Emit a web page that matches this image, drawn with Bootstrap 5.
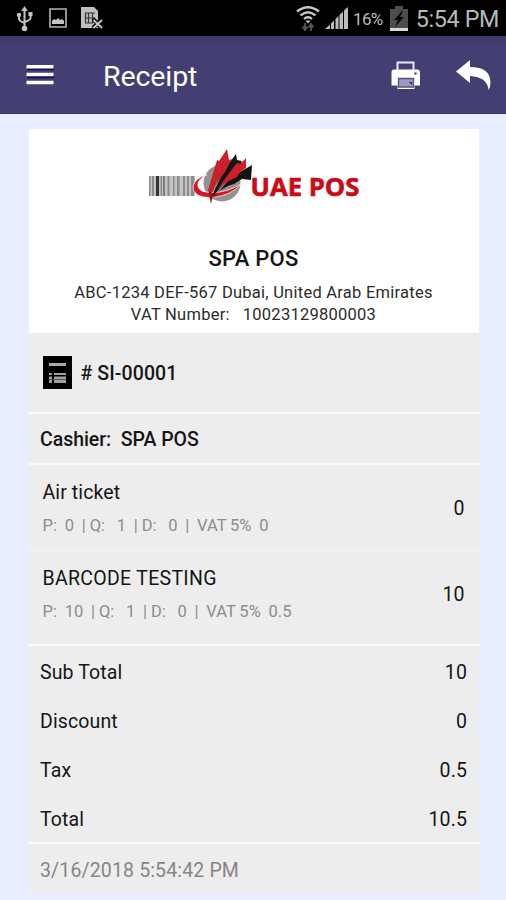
<!DOCTYPE html>
<html lang="en">
<head>
<meta charset="utf-8">
<meta name="viewport" content="width=device-width, initial-scale=1">
<title>Receipt</title>
<link rel="stylesheet" href="https://cdn.jsdelivr.net/npm/bootstrap@5.3.0/dist/css/bootstrap.min.css">
<style>
body { background: #e8edff; font-family: Roboto, "Liberation Sans", sans-serif; color: #161616; font-size: 19.5px; line-height: 24px; height: 900px; overflow: hidden; }
svg { display: block; flex: none; }
.status { background: #000; height: 36px; color: #b9b9b9; padding: 0 7px 0 15px; }
.photo { margin-left: 14px; }
.sim { margin-left: 14px; }
.signal { margin-left: 4px; }
.pct { font-size: 17px; letter-spacing: -.6px; margin: 2px 0 0 4px; }
.battery { margin-left: 7px; }
.clock { font-size: 23.3px; letter-spacing: -.35px; margin: 1px 0 0 8px; }
.topbar { background: linear-gradient(#3d3a6b, #433f73 14px); height: 78px; border-bottom: 1px solid #38356a; padding: 0 14px 0 26px; }
.title { font-size: 28.5px; margin: 5px 0 0 49px; line-height: 34px; letter-spacing: -.1px; }
.back { margin-left: 35px; }
.receipt { width: 450px; margin: 15px 0 0 28.5px; background: #ededed; }
.company { background: #fff; height: 204px; padding-top: 20px; }
.brand-name { font-size: 22px; font-weight: 500; line-height: 26px; margin-top: 37px; letter-spacing: .25px; }
.address { font-size: 16.5px; line-height: 22px; color: #2c2c2c; margin-top: 10px; letter-spacing: .25px; }
.ruled { border-bottom: 2px solid #fbfbfb; }
.invoice { height: 81px; padding-left: 14px; }
.invoice-no { margin: 2px 0 0 9px; letter-spacing: .1px; }
.cashier { height: 51px; padding: 2px 11.5px 0; letter-spacing: -.05px; }
.strong-line { font-weight: 500; }
.line-item { padding: 2px 14px 0; }
.item-a { height: 86px; border-bottom: 1px solid #f5f5f5; }
.item-b { height: 95px; padding-bottom: 8px; padding-top: 2px; }
.item-name { letter-spacing: .1px; }
.item-b .item-name { letter-spacing: .3px; }
.detail { font-size: 16.5px; color: #8c8c8c; line-height: 22px; margin-top: 10px; white-space: pre; word-spacing: -.2px; }
.totals { height: 198px; padding: 2px 11.5px 0; letter-spacing: .12px; }
.total-row { height: 49.2px; }
.stamp { height: 50px; padding: 3px 11.5px 0; color: #858585; letter-spacing: .15px; }
</style>
<script src="https://cdn.jsdelivr.net/npm/bootstrap@5.3.0/dist/js/bootstrap.bundle.min.js"></script>
</head>
<body>
<div class="status d-flex align-items-center justify-content-between">
  <div class="d-flex align-items-center">
    <svg width="20" height="28" viewBox="0 0 20 28" fill="none" stroke="#c4c4c4" stroke-width="2"><path d="M9.500 4v20M4 11v4q0 2 5.500 4M15.500 10v4q0 2-6 4"/><g fill="#c4c4c4" stroke="none"><path d="M9.500 2l3.200 5H6.300z"/><circle cx="9.500" cy="24.500" r="2.800"/><circle cx="4" cy="11" r="2.200"/><path d="M13.500 8h4v4h-4z"/></g></svg>
    <svg class="photo" width="18" height="20" viewBox="0 0 18 20"><path d="M1 1h16v18H1z" fill="none" stroke="#b5b5b5" stroke-width="1.600"/><path d="M3 16v-3l2-2 2 1 2-2 2 2 2-1 2 2v3z" fill="#c4c4c4"/></svg>
    <svg class="sim" width="24" height="24" viewBox="0 0 24 24"><path d="M0 1h13l4 4v17H0z" fill="#bfbfbf"/><path d="M4.500 7v10M7.500 7v10M4 7h10M4 12h10M11.500 7v10M4 17h8" stroke="#333" stroke-width="1.200" fill="none"/><path d="M12 13l9 9M21 13l-9 9" stroke="#000" stroke-width="4"/><path d="M12.500 14l8.500 8M21 14l-8.500 8" stroke="#c8c8c8" stroke-width="1.900"/></svg>
  </div>
  <div class="d-flex align-items-center">
    <svg width="24" height="28" viewBox="0 0 24 28" fill="none" stroke="#c6c6c6" stroke-width="2.300"><path d="M1 7.500q11-8.500 22 0M4.500 11.500q7.500-6.500 15 0M8 15q4-3.500 8 0"/><path d="M9.500 16.500h5L12 19.500z" fill="#c6c6c6" stroke="none"/><path d="M9 19v6M6.500 22.500L9 26l2.500-3.500M15 27v-6M12.500 23.500L15 20l2.500 3.500" stroke="#555" stroke-width="1.800"/></svg>
    <svg class="signal" width="25" height="24" viewBox="0 0 25 24" fill="#bcbcbc"><path d="M1 23l5-4.500V23zM7 17.500l3-3V23H7zM11.500 13l3-3v13h-3zM15.500 9l3.500-3.500V23h-3.500zM20 4.500L24 1v22h-4z"/></svg>
    <span class="pct">16%</span>
    <svg class="battery" width="18" height="27" viewBox="0 0 18 27"><path d="M5 1h8v3h5v22H0V4h5z" fill="#4d4d4d"/><path d="M12 6L4 15h4l-3 7 9-10h-4l3-6z" fill="#080808"/><path d="M0 23h18v3H0z" fill="#d8d8d8"/></svg>
    <span class="clock">5:54 PM</span>
  </div>
</div>
<nav class="topbar d-flex align-items-center justify-content-between text-white">
  <div class="d-flex align-items-center">
    <svg width="28" height="22" viewBox="0 0 28 22"><path d="M1 4.500h27M1 12.500h27" stroke="#120d5c" stroke-width="3.500"/><path d="M.5 2.700h27M.5 10.500h27M.5 18.500h27" stroke="#fff" stroke-width="3.600"/></svg>
    <span class="title">Receipt</span>
  </div>
  <div class="d-flex align-items-center">
    <svg width="30" height="30" viewBox="0 0 30 30"><path d="M6.500 10V2.500h16V10" fill="#433f73" stroke="#e9e9fa" stroke-width="2"/><path d="M3 9.500h23q3 0 3 3v13h-5.500V29H6.500v-3.500H.5v-13q0-3 2.500-3z" fill="#fff"/><path d="M7.500 18.500h15v8.500h-15z" fill="#9c99c0" stroke="#55517e" stroke-width="1.300"/><path d="M18 22l3 0v3z" fill="#1b1760"/><circle cx="24.500" cy="13.500" r="1.300" fill="#55517e"/></svg>
    <svg class="back" width="36" height="30" viewBox="0 0 36 30"><path d="M0 11.500L14 0v7q20 0 20.500 15 0 5-2 8-1-13-18.500-14v7z" fill="#fff"/></svg>
  </div>
</nav>
<main class="receipt">
  <header class="company text-center">
    <svg class="mx-auto" width="214" height="60" viewBox="0 0 214 60">
      <path d="M2 27h46v20H2z" fill="#c4c4c4"/>
      <path d="M2 27h1.500v20H2zM5 27h2v20H5zM13.500 27h1.500v20h-1.500zM20.500 27h2v20h-2zM26 27h1.500v20H26zM30 27h2.500v20H30zM36 27h2v20h-2zM40 27h2v20h-2zM44 27h3v20h-3z" fill="#8b8b8b"/>
      <path d="M9 27h3v20H9zM16.500 27h1v20h-1z" fill="#333"/>
      <circle cx="75" cy="34" r="18.500" fill="#929292"/>
      <path d="M60 26C46 29 42 41 51 46c11 6 34 1 44-12-10 8-29 12-40 8-7-4-5-12 5-16z" fill="#d21823" stroke="#fff" stroke-width=".7"/>
      <path d="M63 51L80 15l3-2 6-8 1 6 4.500 1-1 10-8 3-9 10z" fill="#141414"/>
      <path d="M64 52L84 28l9-5 12-7-1 15-9-1-8 5q-14 3-23 17z" fill="#141414"/>
      <path d="M63 51L80 27l10-13 3 1 6-6v10l-6 4-3 5-10 5q-10 6-17 18z" fill="#cf202a"/>
      <path d="M62 50V38l8-27 2 1L80 0l2 11 3-1-7 13-9 12z" fill="#c9202a"/>
      <path d="M61 39l3 16 2-9z" fill="#9b151c"/>
      <text x="103.500" y="47" fill="#c90c18" font-family="Open Sans, sans-serif" font-size="25.500" font-weight="700" stroke="#c90c18" stroke-width=".6" textLength="109" lengthAdjust="spacingAndGlyphs">UAE POS</text>
    </svg>
    <h1 class="brand-name mb-0">SPA POS</h1>
    <div class="address">ABC-1234 DEF-567 Dubai, United Arab Emirates<br>VAT Number: &nbsp; 10023129800003</div>
  </header>
  <section class="invoice ruled strong-line d-flex align-items-center">
    <svg width="29" height="33" viewBox="0 0 29 33"><path d="M0 0h29v33H0z" fill="#000"/><path d="M6 7h17v3H6z" fill="#aaa"/><path d="M6 17h3v2H6zM11 17h12v2H11zM6 20.500h3V27H6zM11 20.500h12V27H11z" fill="#a0a0a0"/><path d="M6 23.500h17" stroke="#555"/></svg>
    <span class="invoice-no"># SI-00001</span>
  </section>
  <section class="cashier ruled strong-line d-flex align-items-center">Cashier:&nbsp; SPA POS</section>
  <section class="line-item item-a d-flex align-items-center justify-content-between">
    <div><div class="item-name">Air ticket</div><div class="detail">P:  0  | Q:   1  | D:   0  |  VAT 5%  0</div></div>
    <span>0</span>
  </section>
  <section class="line-item item-b ruled d-flex align-items-center justify-content-between">
    <div><div class="item-name">BARCODE TESTING</div><div class="detail">P:  10  | Q:   1  | D:   0  |  VAT 5%  0.5</div></div>
    <span>10</span>
  </section>
  <section class="totals ruled">
    <div class="total-row d-flex align-items-center justify-content-between"><span>Sub Total</span><span>10</span></div>
    <div class="total-row d-flex align-items-center justify-content-between"><span>Discount</span><span>0</span></div>
    <div class="total-row d-flex align-items-center justify-content-between"><span>Tax</span><span>0.5</span></div>
    <div class="total-row d-flex align-items-center justify-content-between"><span>Total</span><span>10.5</span></div>
  </section>
  <footer class="stamp d-flex align-items-center">3/16/2018 5:54:42 PM</footer>
</main>
</body>
</html>
